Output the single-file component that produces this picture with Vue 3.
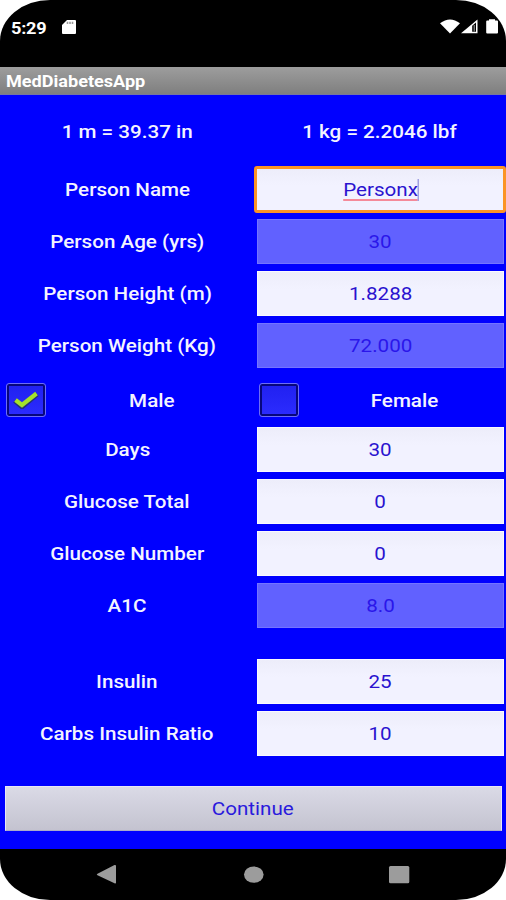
<script setup>
  import { ref } from "vue"

  // state
  const fields = ref([
    { label: "Person Name", value: "Personx", focused: true },
    { label: "Person Age (yrs)", value: "30", disabled: true },
    { label: "Person Height (m)", value: "1.8288" },
    { label: "Person Weight (Kg)", value: "72.000", disabled: true }
  ])

  const genders = ref([
    { label: "Male", checked: true },
    { label: "Female", checked: false }
  ])

  const results = ref([
    { label: "Days", value: "30" },
    { label: "Glucose Total", value: "0" },
    { label: "Glucose Number", value: "0" },
    { label: "A1C", value: "8.0", disabled: true },
    { label: "Insulin", value: "25", spaced: true },
    { label: "Carbs Insulin Ratio", value: "10" }
  ])

  const selectGender = (ind) => {
    genders.value.forEach((gender, i) => (gender.checked = i === ind))
  }
</script>

<template>
  <div class="phone">
    <header class="status">
      <span class="time wide">5:29</span>
      <svg class="sd" width="14" height="14" viewBox="0 0 14 14">
        <path d="M5 0H13Q14 0 14 1V13Q14 14 13 14H1Q0 14 0 13V5Z" fill="#fff" />
        <path d="M5.5 1.8V4M8 1.8V4M10.5 1.8V4" stroke="#999" stroke-width="1.6" />
      </svg>
      <svg class="signals" width="58" height="15" viewBox="0 0 58 15">
        <path d="M0 4.2Q10 -3.4 20 4.2L10 14.5Z" fill="#fff" />
        <path d="M21 14.3L37.5 0.5V14.3Z" fill="#fff" />
        <path d="M32.2 6.8L36 3.4V12.7H32.2Z" fill="#000" />
        <path d="M34.2 6V12.5" stroke="#aaa" stroke-width="1" />
        <path d="M49 1.5V0.3H55V1.5H57Q58 1.5 58 2.5V13.5Q58 14.5 57 14.5H47.2Q46.2 14.5 46.2 13.5V2.5Q46.2 1.5 47.2 1.5Z" fill="#fff" />
      </svg>
    </header>

    <div class="title"><span class="wide">MedDiabetesApp</span></div>

    <main class="form">
      <div class="row units">
        <div class="label"><span class="wide">1 m = 39.37 in</span></div>
        <div class="label"><span class="wide">1 kg = 2.2046 lbf</span></div>
      </div>

      <div v-for="field in fields" :key="field.label" class="row">
        <div class="label"><span class="wide">{{ field.label }}</span></div>
        <div class="field" :class="{ focused: field.focused, disabled: field.disabled }">
          <span class="wide">{{ field.value }}</span>
        </div>
      </div>

      <div class="row genders">
        <div v-for="(gender, ind) in genders" :key="gender.label" class="gender" @click="selectGender(ind)">
          <div class="box">
            <svg v-if="gender.checked" width="26" height="18" viewBox="0 0 26 18">
              <path d="M2 9.5L9 15.5L24 3" fill="none" stroke="#23307a" stroke-width="5.5" />
              <path d="M2.5 9L9 14L23.5 2.5" fill="none" stroke="#a4e22c" stroke-width="4.2" />
            </svg>
          </div>
          <div class="label"><span class="wide">{{ gender.label }}</span></div>
        </div>
      </div>

      <div v-for="field in results" :key="field.label" class="row" :class="{ spaced: field.spaced }">
        <div class="label"><span class="wide">{{ field.label }}</span></div>
        <div class="field" :class="{ disabled: field.disabled }">
          <span class="wide">{{ field.value }}</span>
        </div>
      </div>

      <button class="continue"><span class="wide">Continue</span></button>
    </main>

    <nav class="nav">
      <svg width="506" height="51" viewBox="0 0 506 51">
        <g fill="#9c9c9c">
          <path d="M97.5 24.8L114.5 16Q116 15.5 116 17V33.5Q116 35 114.5 34.3L97.5 26.2Q96 25.5 97.5 24.8Z" />
          <ellipse cx="253.8" cy="25.6" rx="9.8" ry="8.2" />
          <rect x="389" y="17" width="20.3" height="17.2" rx="1.5" />
        </g>
      </svg>
    </nav>
  </div>
</template>

<style>
  body {
    margin: 0;
    background-color: #fff;
  }
</style>

<style scoped>
  .phone {
    display: flex;
    flex-direction: column;
    width: 506px;
    height: 900px;
    overflow: hidden;
    border-radius: 50px / 41px;
    background-color: #000;
    color: #fff;
    font-family: Roboto, sans-serif;
    font-size: 18px;
  }

  /* glyphs are stretched sideways over the whole screen */
  .wide {
    display: inline-block;
    transform: scaleX(1.145);
    white-space: nowrap;
  }

  .status {
    display: flex;
    align-items: flex-start;
    box-sizing: border-box;
    height: 67px;
    padding: 19px 8px 0 11px;
  }

  .time {
    width: 51px;
    line-height: 19px;
    font-size: 16.5px;
    font-weight: 700;
    letter-spacing: -0.2px;
    transform: scaleX(1.1);
    transform-origin: left;
  }

  .sd {
    margin-top: 1px;
  }

  .signals {
    margin-left: auto;
  }

  .title {
    box-sizing: border-box;
    height: 28px;
    padding: 1px 0 0 6px;
    border-bottom: 1px solid #7777a0;
    background-image: linear-gradient(#9d9d9d, #7f7f7f);
    line-height: 28px;
    font-size: 16px;
    font-weight: 700;
  }

  .title .wide {
    transform: scaleX(1.13);
    transform-origin: left;
  }

  .form {
    display: flex;
    flex-direction: column;
    height: 754px;
    background-color: #00f;
  }

  .row {
    display: flex;
    align-items: center;
    height: 52px;
  }

  .units {
    height: 64px;
    padding: 4px 0 0;
  }

  .spaced {
    margin-top: 24px;
  }

  .label {
    box-sizing: border-box;
    width: 254px;
    padding-left: 0.5px;
    color: #f4f4ff;
    text-align: center;
    font-weight: 500;
  }

  .field {
    box-sizing: border-box;
    width: 247px;
    height: 45px;
    margin-left: 3px;
    border: 1px solid #fafaff;
    background-image: linear-gradient(#ededfa, #f2f2ff 40%);
    color: #2a12cf;
    line-height: 43px;
    text-align: center;
  }

  .disabled {
    border-color: #7474ff;
    background-image: none;
    background-color: #6161ff;
    color: #2a16ea;
  }

  .focused {
    width: 252px;
    height: 47px;
    margin-left: 0;
    padding-left: 2px;
    border: 3px solid #fb9426;
    border-radius: 3px;
    line-height: 41px;
  }

  .focused .wide {
    height: 22px;
    border-right: 1px solid #8888d8;
    line-height: 22px;
    box-shadow: inset 0 -2px #f58a9a;
  }

  .genders {
    height: 52px;
  }

  .gender {
    display: flex;
    align-items: center;
    width: 253px;
    padding-top: 5px;
  }

  .box {
    display: flex;
    align-items: center;
    justify-content: center;
    flex-shrink: 0;
    box-sizing: border-box;
    width: 40px;
    height: 34px;
    margin-left: 6px;
    border: 1.5px solid #6d6df5;
    border-radius: 3px;
    background-image: linear-gradient(#2020f0, #2c2cff);
    box-shadow: inset 0 0 0 2px #07077c;
  }

  .gender .label {
    width: 211px;
    padding: 2px 0 0 4px;
  }

  .continue {
    box-sizing: border-box;
    width: 497px;
    height: 45px;
    margin: 26.5px 0 0 5px;
    padding: 0 1px 0 0;
    border: 1px solid #e8e8f6;
    border-bottom-color: #aaaacb;
    background-image: linear-gradient(#dadae6, #c4c3d0);
    color: #2a1adc;
    font-family: inherit;
    font-size: 18px;
  }

  .nav {
    height: 51px;
  }
</style>
